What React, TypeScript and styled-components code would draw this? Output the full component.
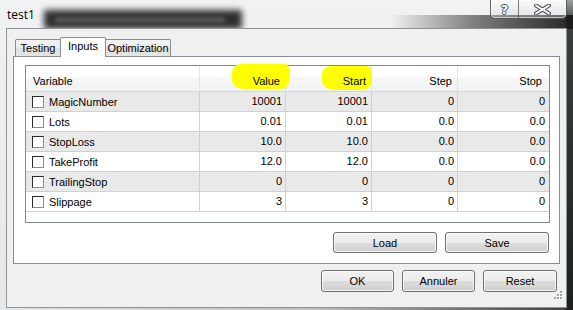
import React from "react";
import styled, { createGlobalStyle } from "styled-components";

const GlobalStyle = createGlobalStyle`
  html, body { margin: 0; padding: 0; background: #ffffff; }
  body { font-family: "Liberation Sans", Arial, sans-serif; }
  * { box-sizing: border-box; }
`;

const Window = styled.div`
  position: relative;
  width: 573px;
  height: 310px;
  display: flex;
  flex-direction: column;
  padding: 0 6px 2px 6px;
  overflow: hidden;
  background:
    linear-gradient(to right, rgba(35, 35, 35, 0), rgba(35, 35, 35, 0.55) 45%, rgba(25, 25, 25, 0.95)) 390px 15px / 183px 14px no-repeat,
    linear-gradient(to bottom, #9aa19d 0, #3a403c 22px, #1c201e 100%) 566px 0 / 7px 310px no-repeat,
    linear-gradient(to right, #e2e8ec 0, #b9bec1 55%, #3a3f3c 100%) 0 307px / 573px 3px no-repeat,
    linear-gradient(to bottom, #f0f2f3 0, #e4e8eb 100%);

  &::before {
    content: "";
    position: absolute;
    left: 44px;
    top: 10px;
    width: 198px;
    height: 19px;
    background: #2e2e2e;
    filter: blur(3px);
    pointer-events: none;
  }
  &::after {
    content: "";
    position: absolute;
    left: 55px;
    top: 18px;
    width: 170px;
    height: 4px;
    background: #666666;
    filter: blur(2px);
    pointer-events: none;
  }
`;

const TitleBar = styled.div`
  position: relative;
  z-index: 1;
  height: 28px;
  display: flex;
  align-items: flex-start;
  justify-content: space-between;
`;

const Title = styled.div`
  margin: 7px 0 0 1px;
  font-family: "Open Sans", "Noto Sans", sans-serif;
  font-size: 12px;
  line-height: 16px;
  color: #000;
`;

const CaptionGroup = styled.div`
  display: flex;
  height: 19px;
  border: 1px solid rgba(70, 74, 78, 0.85);
  border-top: none;
  border-radius: 0 0 5px 5px;
  overflow: hidden;
  background: linear-gradient(to bottom, rgba(255, 255, 255, 0.55), rgba(200, 204, 206, 0.35));
  box-shadow: inset 0 0 0 1px rgba(255, 255, 255, 0.55);
`;

const CaptionButton = styled.div<{ $w: number; $divider?: boolean }>`
  width: ${(p) => p.$w}px;
  height: 100%;
  display: flex;
  align-items: center;
  justify-content: center;
  border-right: ${(p) => (p.$divider ? "1px solid rgba(70,74,78,0.7)" : "none")};
  font-family: "DejaVu Sans", sans-serif;
  font-weight: bold;
  font-size: 13px;
  color: #ffffff;
  text-shadow: -1px 0 #4a4f55, 1px 0 #4a4f55, 0 -1px #4a4f55, 0 1px #4a4f55;
`;

const Client = styled.div`
  position: relative;
  z-index: 1;
  flex: 1;
  display: flex;
  flex-direction: column;
  border: 1px solid #8f9396;
  background: #f0f0f0;
  padding: 8px 9px 0 6px;
`;

const TabStrip = styled.div`
  display: flex;
  align-items: flex-end;
  height: 19px;
  padding-left: 2px;
`;

const Tab = styled.div<{ $active?: boolean; $w: number; $first?: boolean }>`
  position: relative;
  z-index: ${(p) => (p.$active ? 2 : 1)};
  width: ${(p) => p.$w}px;
  height: ${(p) => (p.$active ? 20 : 17)}px;
  margin-left: ${(p) => (p.$first ? 0 : -1)}px;
  margin-bottom: ${(p) => (p.$active ? -1 : 0)}px;
  border: 1px solid #898c95;
  border-bottom: none;
  border-radius: 2px 2px 0 0;
  background: ${(p) =>
    p.$active ? "#ffffff" : "linear-gradient(to bottom, #f3f3f3 0%, #ebebeb 50%, #dedede 51%, #e5e5e5 100%)"};
  font-size: 11px;
  line-height: ${(p) => (p.$active ? 17 : 17)}px;
  text-align: center;
  color: #000;
`;

const Panel = styled.div`
  width: 547px;
  height: 208px;
  border: 1px solid #898c95;
  background: #ffffff;
  display: flex;
  flex-direction: column;
  padding: 8px 10px 0 11px;
`;

const Table = styled.div`
  width: 525px;
  height: 158px;
  border: 1px solid #828790;
  background: #ffffff;
  display: flex;
  flex-direction: column;
`;

const cols = "174px 86px 86px 86px 91px";

const HeaderRow = styled.div`
  display: grid;
  grid-template-columns: ${cols};
  height: 26px;
  border-bottom: 1px solid #d5d5d5;
  background: linear-gradient(to bottom, #ffffff 0%, #ffffff 45%, #f6f7f8 46%, #f1f2f3 100%);
`;

const HeaderCell = styled.div<{ $align: "left" | "right"; $pr?: number; $last?: boolean }>`
  position: relative;
  border-right: ${(p) => (p.$last ? "none" : "1px solid #e3e5e8")};
  font-size: 11px;
  line-height: 22px;
  padding-top: 4px;
  color: #000;
  text-align: ${(p) => p.$align};
  padding-left: ${(p) => (p.$align === "left" ? 7 : 0)}px;
  padding-right: ${(p) => p.$pr ?? 5}px;
  white-space: nowrap;
`;

const HeaderText = styled.span`
  position: relative;
  z-index: 1;
`;

const Highlight = styled.span<{ $l: number; $t: number; $w: number; $h: number }>`
  position: absolute;
  left: ${(p) => p.$l}px;
  top: ${(p) => p.$t}px;
  width: ${(p) => p.$w}px;
  height: ${(p) => p.$h}px;
  background: #ffff00;
  border-radius: 10px 6px 9px 12px / 8px 6px 10px 9px;
  filter: blur(0.6px);
  z-index: 0;
`;

const Row = styled.div<{ $alt: boolean }>`
  display: grid;
  grid-template-columns: ${cols};
  height: 20px;
  border-bottom: 1px solid #d0d0d0;
  background: ${(p) => (p.$alt ? "#e9e9e9" : "#ffffff")};
`;

const Cell = styled.div<{ $last?: boolean }>`
  border-right: ${(p) => (p.$last ? "none" : "1px solid #d0d0d0")};
  font-size: 11px;
  line-height: 19px;
  text-align: right;
  padding-right: ${(p) => (p.$last ? 4 : 3)}px;
  color: #000;
  white-space: nowrap;
`;

const NameCell = styled.div`
  display: flex;
  align-items: center;
  gap: 5px;
  padding-left: 6px;
  border-right: 1px solid #d0d0d0;
  font-size: 11px;
  color: #000;
  white-space: nowrap;
`;

const Check = styled.span`
  width: 12px;
  height: 12px;
  border: 1px solid;
  border-color: #2a2a2a #8c8c8c #8c8c8c #2a2a2a;
  background: #ffffff;
`;

const ButtonRow = styled.div<{ $mt: number; $gap: number }>`
  display: flex;
  justify-content: flex-end;
  gap: ${(p) => p.$gap}px;
  margin-top: ${(p) => p.$mt}px;
`;

const Button = styled.div<{ $w: number; $h: number }>`
  width: ${(p) => p.$w}px;
  height: ${(p) => p.$h}px;
  border: 1px solid #707070;
  border-radius: 3px;
  background: linear-gradient(to bottom, #f2f2f2 0%, #ebebeb 50%, #dddddd 51%, #cfcfcf 100%);
  box-shadow: inset 0 0 0 1px rgba(255, 255, 255, 0.75);
  display: flex;
  align-items: center;
  justify-content: center;
  font-size: 11px;
  color: #000;
`;

const Grip = styled.svg`
  position: absolute;
  right: 3px;
  bottom: 7px;
`;

type Param = { name: string; value: string; start: string; step: string; stop: string };

const params: Param[] = [
  { name: "MagicNumber", value: "10001", start: "10001", step: "0", stop: "0" },
  { name: "Lots", value: "0.01", start: "0.01", step: "0.0", stop: "0.0" },
  { name: "StopLoss", value: "10.0", start: "10.0", step: "0.0", stop: "0.0" },
  { name: "TakeProfit", value: "12.0", start: "12.0", step: "0.0", stop: "0.0" },
  { name: "TrailingStop", value: "0", start: "0", step: "0", stop: "0" },
  { name: "Slippage", value: "3", start: "3", step: "0", stop: "0" },
];

export default function App() {
  return (
    <>
      <GlobalStyle />
      <Window>
        <TitleBar>
          <Title>test1</Title>
          <CaptionGroup>
            <CaptionButton $w={28} $divider>?</CaptionButton>
            <CaptionButton $w={47}>
              <svg width="17" height="11" viewBox="0 0 17 11">
                <path
                  d="M2 1.5 L8.5 5.5 L15 1.5 M2 9.5 L8.5 5.5 L15 9.5"
                  stroke="#4a4f55"
                  strokeWidth="4"
                  fill="none"
                  strokeLinecap="round"
                />
                <path
                  d="M2 1.5 L8.5 5.5 L15 1.5 M2 9.5 L8.5 5.5 L15 9.5"
                  stroke="#ffffff"
                  strokeWidth="2"
                  fill="none"
                  strokeLinecap="round"
                />
              </svg>
            </CaptionButton>
          </CaptionGroup>
        </TitleBar>
        <Client>
          <TabStrip>
            <Tab $w={46} $first>Testing</Tab>
            <Tab $w={46} $active>Inputs</Tab>
            <Tab $w={66}>Optimization</Tab>
          </TabStrip>
          <Panel>
            <Table>
              <HeaderRow>
                <HeaderCell $align="left">Variable</HeaderCell>
                <HeaderCell $align="right">
                  <Highlight $l={32} $t={-2} $w={58} $h={25} />
                  <HeaderText>Value</HeaderText>
                </HeaderCell>
                <HeaderCell $align="right">
                  <Highlight $l={36} $t={0} $w={50} $h={24} />
                  <HeaderText>Start</HeaderText>
                </HeaderCell>
                <HeaderCell $align="right">Step</HeaderCell>
                <HeaderCell $align="right" $pr={7} $last>
                  Stop
                </HeaderCell>
              </HeaderRow>
              {params.map((p, i) => (
                <Row key={p.name} $alt={i % 2 === 0}>
                  <NameCell>
                    <Check />
                    {p.name}
                  </NameCell>
                  <Cell>{p.value}</Cell>
                  <Cell>{p.start}</Cell>
                  <Cell>{p.step}</Cell>
                  <Cell $last>{p.stop}</Cell>
                </Row>
              ))}
            </Table>
            <ButtonRow $mt={9} $gap={8}>
              <Button $w={104} $h={21}>Load</Button>
              <Button $w={104} $h={21}>Save</Button>
            </ButtonRow>
          </Panel>
          <ButtonRow $mt={6} $gap={8}>
            <Button $w={73} $h={22}>OK</Button>
            <Button $w={73} $h={22}>Annuler</Button>
            <Button $w={74} $h={22}>Reset</Button>
          </ButtonRow>
          <Grip width="9" height="9" viewBox="0 0 9 9">
            {[
              [6, 0],
              [6, 3],
              [3, 3],
              [6, 6],
              [3, 6],
              [0, 6],
            ].map(([x, y]) => (
              <g key={`${x}-${y}`}>
                <rect x={x + 1} y={y + 1} width="2" height="2" fill="#ffffff" />
                <rect x={x} y={y} width="2" height="2" fill="#a0a0a0" />
              </g>
            ))}
          </Grip>
        </Client>
      </Window>
    </>
  );
}
